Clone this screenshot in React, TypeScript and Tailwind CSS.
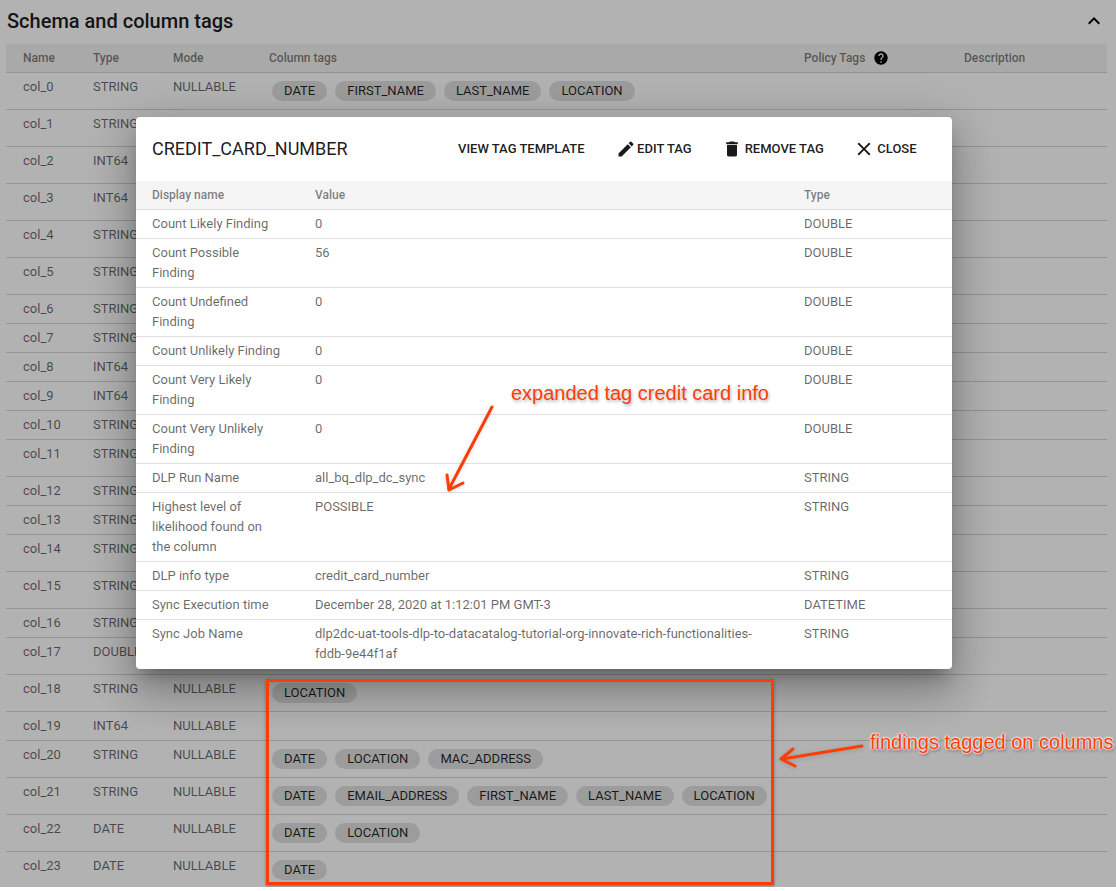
// App.tsx
const columns: { name: string; type: string; mode: string; tall: boolean; tags: string[] }[] = [
  { name: "col_0", type: "STRING", mode: "NULLABLE", tall: true, tags: ["DATE", "FIRST_NAME", "LAST_NAME", "LOCATION"] },
  // col_1 to col_17: the rest of these rows sits behind the dialog
  { name: "col_1", type: "STRING", mode: "", tall: true, tags: [] },
  { name: "col_2", type: "INT64", mode: "", tall: true, tags: [] },
  { name: "col_3", type: "INT64", mode: "", tall: true, tags: [] },
  { name: "col_4", type: "STRING", mode: "", tall: true, tags: [] },
  { name: "col_5", type: "STRING", mode: "", tall: true, tags: [] },
  { name: "col_6", type: "STRING", mode: "", tall: false, tags: [] },
  { name: "col_7", type: "STRING", mode: "", tall: false, tags: [] },
  { name: "col_8", type: "INT64", mode: "", tall: false, tags: [] },
  { name: "col_9", type: "INT64", mode: "", tall: false, tags: [] },
  { name: "col_10", type: "STRING", mode: "", tall: false, tags: [] },
  { name: "col_11", type: "STRING", mode: "", tall: true, tags: [] },
  { name: "col_12", type: "STRING", mode: "", tall: false, tags: [] },
  { name: "col_13", type: "STRING", mode: "", tall: false, tags: [] },
  { name: "col_14", type: "STRING", mode: "", tall: true, tags: [] },
  { name: "col_15", type: "STRING", mode: "", tall: true, tags: [] },
  { name: "col_16", type: "STRING", mode: "", tall: false, tags: [] },
  { name: "col_17", type: "DOUBLE", mode: "", tall: true, tags: [] },
  { name: "col_18", type: "STRING", mode: "NULLABLE", tall: true, tags: ["LOCATION"] },
  { name: "col_19", type: "INT64", mode: "NULLABLE", tall: false, tags: [] },
  { name: "col_20", type: "STRING", mode: "NULLABLE", tall: true, tags: ["DATE", "LOCATION", "MAC_ADDRESS"] },
  { name: "col_21", type: "STRING", mode: "NULLABLE", tall: true, tags: ["DATE", "EMAIL_ADDRESS", "FIRST_NAME", "LAST_NAME", "LOCATION"] },
  { name: "col_22", type: "DATE", mode: "NULLABLE", tall: true, tags: ["DATE", "LOCATION"] },
  { name: "col_23", type: "DATE", mode: "NULLABLE", tall: true, tags: ["DATE"] },
];

const tagFields = [
  { name: "Count Likely Finding", value: "0", type: "DOUBLE" },
  { name: "Count Possible Finding", value: "56", type: "DOUBLE" },
  { name: "Count Undefined Finding", value: "0", type: "DOUBLE" },
  { name: "Count Unlikely Finding", value: "0", type: "DOUBLE" },
  { name: "Count Very Likely Finding", value: "0", type: "DOUBLE" },
  { name: "Count Very Unlikely Finding", value: "0", type: "DOUBLE" },
  { name: "DLP Run Name", value: "all_bq_dlp_dc_sync", type: "STRING" },
  { name: "Highest level of likelihood found on the column", value: "POSSIBLE", type: "STRING" },
  { name: "DLP info type", value: "credit_card_number", type: "STRING" },
  { name: "Sync Execution time", value: "December 28, 2020 at 1:12:01 PM GMT-3", type: "DATETIME" },
  {
    name: "Sync Job Name",
    value: "dlp2dc-uat-tools-dlp-to-datacatalog-tutorial-org-innovate-rich-functionalities-fddb-9e44f1af",
    type: "STRING",
  },
];

// Material icons, drawn inline
const Icon = ({ d, className }: { d: string; className: string }) => (
  <svg viewBox="0 0 24 24" fill="currentColor" className={className}>
    <path d={d} />
  </svg>
);

const ICON_EDIT =
  "M3 17.25V21h3.75L17.81 9.94l-3.75-3.75L3 17.25zM20.71 7.04c.39-.39.39-1.02 0-1.41l-2.34-2.34c-.39-.39-1.02-.39-1.41 0l-1.83 1.83 3.75 3.75 1.83-1.83z";
const ICON_DELETE = "M6 19c0 1.1.9 2 2 2h8c1.1 0 2-.9 2-2V7H6v12zM19 4h-3.5l-1-1h-5l-1 1H5v2h14V4z";
const ICON_CLOSE =
  "M19 6.41L17.59 5 12 10.59 6.41 5 5 6.41 10.59 12 5 17.59 6.41 19 12 13.41 17.59 19 19 17.59 13.41 12z";
const ICON_LESS = "M12 8l-6 6 1.41 1.41L12 10.83l4.59 4.58L18 14z";
const ICON_HELP =
  "M12 2C6.48 2 2 6.48 2 12s4.48 10 10 10 10-4.48 10-10S17.52 2 12 2zm1 17h-2v-2h2v2zm2.07-7.75l-.9.92C13.45 12.9 13 13.5 13 15h-2v-.5c0-1.1.45-2.1 1.17-2.83l1.24-1.26c.37-.36.59-.86.59-1.41 0-1.1-.9-2-2-2s-2 .9-2 2H8c0-2.21 1.79-4 4-4s4 1.79 4 4c0 .88-.36 1.68-.93 2.25z";

const Chip = ({ label }: { label: string }) => (
  <span className="h-5 px-3 rounded-full bg-[#e0e0e0] text-[13px] leading-5 text-black/85 whitespace-nowrap">
    {label}
  </span>
);

const SchemaTable = () => (
  <div className="mx-[6px] w-[1101px]">
    {/* Header */}
    <div className="flex h-[29px] items-center bg-[#f2f2f2] border-b border-[#d5d5d5] text-xs font-medium text-black/50">
      <div className="w-[87px] pl-[17px]">Name</div>
      <div className="w-[80px]">Type</div>
      <div className="w-[96px]">Mode</div>
      <div className="w-[535px]">Column tags</div>
      <div className="w-[160px] flex items-center gap-[8px]">
        Policy Tags
        <Icon d={ICON_HELP} className="w-4 h-4 text-black" />
      </div>
      <div>Description</div>
    </div>
    {/* Rows */}
    {columns.map((col) => (
      <div
        key={col.name}
        className={
          col.tall
            ? "flex h-[37px] border-b border-[#d5d5d5] text-[13px] leading-5 text-black/60"
            : "flex h-[29px] border-b border-[#d5d5d5] text-[13px] leading-5 text-black/60"
        }
      >
        <div className="w-[87px] pl-[17px] pt-1">{col.name}</div>
        <div className="w-[80px] pt-1">{col.type}</div>
        <div className="w-[99px] pt-1">{col.mode}</div>
        <div className="flex gap-2 pt-2">
          {col.tags.map((tag) => (
            <Chip key={tag} label={tag} />
          ))}
        </div>
      </div>
    ))}
  </div>
);

const TagDialog = () => (
  <div className="absolute left-[136px] top-[117px] w-[816px] h-[552px] bg-white rounded overflow-hidden shadow-[0_11px_15px_-7px_rgba(0,0,0,0.3),0_24px_38px_3px_rgba(0,0,0,0.18),0_9px_46px_8px_rgba(0,0,0,0.14)]">
    <div className="flex h-[64px] items-center pl-4 text-[13px] font-medium text-black/90">
      <h2 className="w-[306px] text-lg font-normal">CREDIT_CARD_NUMBER</h2>
      <span>VIEW TAG TEMPLATE</span>
      <span className="ml-[31px] flex items-center gap-[1.5px]">
        <Icon d={ICON_EDIT} className="w-5 h-5" />
        EDIT TAG
      </span>
      <span className="ml-[30px] flex items-center gap-[3px]">
        <Icon d={ICON_DELETE} className="w-5 h-5" />
        REMOVE TAG
      </span>
      <span className="ml-[29px] flex items-center gap-[2.5px]">
        <Icon d={ICON_CLOSE} className="w-[22px] h-[22px]" />
        CLOSE
      </span>
    </div>
    <div className="flex h-[29px] items-center bg-[#f5f5f5] border-b border-[#e0e0e0] text-xs font-medium text-black/50">
      <div className="w-[179px] pl-4">Display name</div>
      <div className="w-[489px]">Value</div>
      <div>Type</div>
    </div>
    {tagFields.map((field) => (
      <div
        key={field.name}
        className="flex border-b last:border-b-0 border-[#e0e0e0] pt-1 pb-1 text-[13px] leading-5 text-black/60"
      >
        <div className="w-[179px] pl-4 pr-[32px]">{field.name}</div>
        <div className="w-[489px] pr-[48px]">{field.value}</div>
        <div>{field.type}</div>
      </div>
    ))}
  </div>
);

const Annotations = () => (
  <>
    <div className="absolute left-[266px] top-[679px] w-[508px] h-[206px] border-[3px] border-[#fd3d06] shadow-[0_1px_3px_rgba(0,0,0,0.35)]" />
    <span className="absolute left-[511px] top-[381px] text-[20px] leading-6 font-['Liberation_Sans',sans-serif] text-[#fd3d06] [text-shadow:1px_2px_3px_rgba(0,0,0,0.3)] whitespace-nowrap">
      expanded tag credit card info
    </span>
    <span className="absolute left-[870px] top-[730px] text-[20px] leading-6 font-['Liberation_Sans',sans-serif] text-[#fd3d06] [text-shadow:0_0_2px_#fff,0_0_2px_#fff,0_0_3px_#fff,1px_2px_3px_rgba(0,0,0,0.5)] whitespace-nowrap">
      findings tagged on columns
    </span>
    <svg width="1116" height="887" className="absolute left-0 top-0 pointer-events-none" fill="none">
      <g stroke="#fd3d06" strokeWidth="3" strokeLinecap="round" strokeLinejoin="round" className="drop-shadow-sm">
        <path d="M492 407L449 489" />
        <path d="M447 475L449 490L463 483" />
        <path d="M862 746L782 759" />
        <path d="M793 749L781 759L795 766" />
      </g>
    </svg>
  </>
);

export default function App() {
  return (
    <div className="relative w-[1116px] h-[891px] overflow-hidden bg-white font-['Roboto',sans-serif]">
      <div className="relative h-[887px] overflow-hidden">
        <div className="flex h-[44px] items-center justify-between pl-[7px] pr-[10px] pb-[2px]">
          <h1 className="text-xl font-medium text-black/90">Schema and column tags</h1>
          <Icon d={ICON_LESS} className="w-6 h-6 text-black" />
        </div>
        <SchemaTable />
        <div className="absolute inset-0 bg-black/30" />
        <TagDialog />
        <Annotations />
      </div>
    </div>
  );
}
